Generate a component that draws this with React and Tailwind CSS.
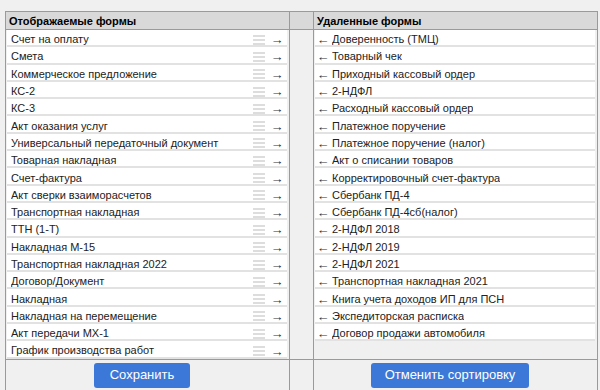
import React from "react";

const shown = [
  "Счет на оплату",
  "Смета",
  "Коммерческое предложение",
  "КС-2",
  "КС-3",
  "Акт оказания услуг",
  "Универсальный передаточный документ",
  "Товарная накладная",
  "Счет-фактура",
  "Акт сверки взаиморасчетов",
  "Транспортная накладная",
  "ТТН (1-Т)",
  "Накладная М-15",
  "Транспортная накладная 2022",
  "Договор/Документ",
  "Накладная",
  "Накладная на перемещение",
  "Акт передачи МХ-1",
  "График производства работ",
];

const removed = [
  "Доверенность (ТМЦ)",
  "Товарный чек",
  "Приходный кассовый ордер",
  "2-НДФЛ",
  "Расходный кассовый ордер",
  "Платежное поручение",
  "Платежное поручение (налог)",
  "Акт о списании товаров",
  "Корректировочный счет-фактура",
  "Сбербанк ПД-4",
  "Сбербанк ПД-4сб(налог)",
  "2-НДФЛ 2018",
  "2-НДФЛ 2019",
  "2-НДФЛ 2021",
  "Транспортная накладная 2021",
  "Книга учета доходов ИП для ПСН",
  "Экспедиторская расписка",
  "Договор продажи автомобиля",
];

const Handle = () => (
  <div className="w-[12px] flex flex-col gap-[2px]">
    <div className="h-[2px] bg-[#dddddd]" />
    <div className="h-[2px] bg-[#dddddd]" />
    <div className="h-[2px] bg-[#dddddd]" />
  </div>
);

export default function App() {
  return (
    <div
      className="w-[600px] h-[390px] overflow-hidden bg-[#f0f0f0] pt-[11px] pl-[5px] text-[11px] text-[#222]"
      style={{ fontFamily: '"Liberation Sans", Arial, sans-serif' }}
    >
      <div className="w-[593px] border border-[#9a9a9a] bg-[#f0f0f0]">
        {/* Header */}
        <div className="flex h-[18px] border-b border-[#9a9a9a] bg-[#d9d9d9] font-bold text-black">
          <div className="w-[284px] border-r border-[#9a9a9a] pl-[3px] pt-[1px] flex items-center">
            Отображаемые формы
          </div>
          <div className="w-[24px] border-r border-[#9a9a9a]" />
          <div className="flex-1 pl-[3px] pt-[1px] flex items-center">Удаленные формы</div>
        </div>

        {/* Lists */}
        <div className="flex border-b border-[#9a9a9a]">
          <div className="w-[284px] border-r border-[#9a9a9a] pl-[1px] pr-[2px]">
            {shown.map((name) => (
              <div
                key={name}
                className="h-[17.3px] border-b-2 border-[#e2e2e2] bg-white flex items-center pt-[4px] pl-[4px] pr-[5px]"
              >
                <span className="flex-1 truncate leading-none">{name}</span>
                <Handle />
                <span className="ml-[7px] w-[10px] flex justify-center text-[13px] leading-none text-[#333]">→</span>
              </div>
            ))}
          </div>
          <div className="w-[24px] border-r border-[#9a9a9a]" />
          <div className="flex-1 pl-[1px] pr-[2px]">
            {removed.map((name) => (
              <div
                key={name}
                className="h-[17.3px] border-b-2 border-[#e2e2e2] bg-white flex items-center pt-[4px] pl-[3px]"
              >
                <span className="w-[10px] flex justify-center text-[13px] leading-none text-[#333] mr-[4px]">←</span>
                <span className="truncate leading-none">{name}</span>
              </div>
            ))}
          </div>
        </div>

        {/* Footer */}
        <div className="flex h-[40px]">
          <div className="w-[284px] border-r border-[#9a9a9a] flex justify-center pt-[3px] pr-[11px]">
            <button className="h-[25px] w-[96px] rounded-[3px] bg-[#3b78d8] text-white text-[13px]">
              Сохранить
            </button>
          </div>
          <div className="w-[24px] border-r border-[#9a9a9a]" />
          <div className="flex-1 flex justify-center pt-[3px] pr-[11px]">
            <button className="h-[25px] w-[158px] rounded-[3px] bg-[#3b78d8] text-white text-[13px]">
              Отменить сортировку
            </button>
          </div>
        </div>
      </div>
    </div>
  );
}
